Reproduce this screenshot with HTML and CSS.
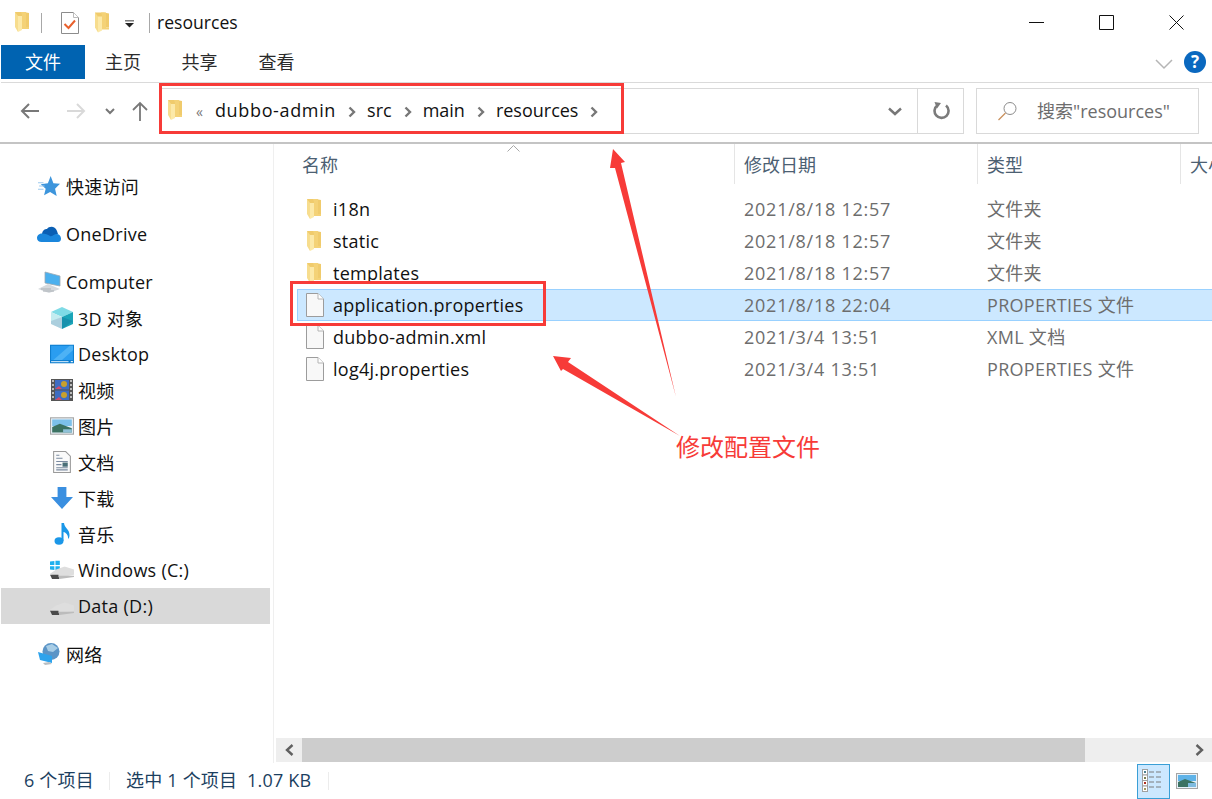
FILE: index.html
```html
<!DOCTYPE html>
<html lang="zh">
<head>
<meta charset="utf-8">
<title>resources</title>
<link rel="stylesheet" href="styles.css">
</head>
<body>
<svg class="defs" width="0" height="0" aria-hidden="true">
  <defs>
    <symbol id="folder" viewBox="0 0 14 20">
      <path d="M0 0H9L14 1V15H6L2 15Z" fill="#f0cb6c"/>
      <path d="M0 0V15L3 20V4Z" fill="#f7dd8e"/>
      <path d="M3 4H7V18L3 20Z" fill="#fcE9a8"/>
      <path d="M6 0H11V15H14V17H7V3Z" fill="#f4d277"/>
    </symbol>
    <symbol id="file" viewBox="0 0 18 24">
      <path d="M.5.5H12L17.500 6V23.500H.5Z" fill="#f8f8f8" stroke="#9c9c9c"/>
      <path d="M12 .5V6H17.500" fill="#fff" stroke="#b4b4b4"/>
    </symbol>
    <symbol id="chev" viewBox="0 0 8 12">
      <path d="M1.500 1.500 6 6 1.500 10.500" fill="none" stroke="#777" stroke-width="2.400"/>
    </symbol>
    <symbol id="drive" viewBox="0 0 23 12">
      <path d="M0 7 6 3 14 0 23 3 23 8 8 11Z" fill="#dedede"/>
      <path d="M0 8 8 8 9 12 2 12Z" fill="#4a4a4a"/>
      <path d="M8 9H23V10L9 12Z" fill="#bcbcbc"/>
    </symbol>
  </defs>
</svg>

<div class="window">
  <header class="titlebar">
    <svg class="ic-folder-t"><use href="#folder"/></svg>
    <span class="tsep tsep-a"></span>
    <svg class="ic-prop" viewBox="0 0 18 22">
      <path d="M.5.500H12.500L17.500 5.500V21.500H.5Z" fill="#fff" stroke="#8c8c8c"/>
      <path d="M12.500.500V5.500H17.500" fill="#fff" stroke="#bbb"/>
      <path d="M3.500 12 7.500 16 14 8.500" fill="none" stroke="#e8602c" stroke-width="2"/>
    </svg>
    <svg class="ic-folder-q"><use href="#folder"/></svg>
    <svg class="ic-qdrop" viewBox="0 0 10 8">
      <path d="M0 .5H10" stroke="#222" stroke-width="1"/>
      <path d="M0 3H10L5 8Z" fill="#222"/>
    </svg>
    <span class="tsep tsep-b"></span>
    <span class="title">resources</span>
    <div class="winbtns">
      <svg class="wb" viewBox="0 0 15 15"><path d="M0 7.500H15" stroke="#111"/></svg>
      <svg class="wb" viewBox="0 0 15 15"><path d="M.5.500H14.500V14.500H.5Z" fill="none" stroke="#111"/></svg>
      <svg class="wb" viewBox="0 0 15 15"><path d="M.5.500 14.500 14.500M14.500.500 .5 14.500" fill="none" stroke="#111"/></svg>
    </div>
  </header>

  <nav class="tabs">
    <span class="tab tab-file">文件</span>
    <span class="tab tab-home">主页</span>
    <span class="tab tab-share">共享</span>
    <span class="tab tab-view">查看</span>
    <span class="tabs-fill"></span>
    <svg class="ribbon-chev" viewBox="0 0 18 11"><path d="M1 1 9 9 17 1" fill="none" stroke="#b5b5b5" stroke-width="1.500"/></svg>
    <span class="help">?</span>
  </nav>

  <section class="addressrow">
    <svg class="nav-btn nav-back" viewBox="0 0 20 16"><path d="M19 8H2M9 1 2 8 9 15" fill="none" stroke="#787878" stroke-width="2"/></svg>
    <svg class="nav-btn nav-fwd" viewBox="0 0 20 16"><path d="M1 8H18M11 1 18 8 11 15" fill="none" stroke="#d9d9d9" stroke-width="2"/></svg>
    <svg class="nav-drop" viewBox="0 0 10 7"><path d="M1 1 5 5 9 1" fill="none" stroke="#777" stroke-width="2"/></svg>
    <svg class="nav-btn nav-up" viewBox="0 0 16 20"><path d="M8 20V2M1 9 8 2 15 9" fill="none" stroke="#787878" stroke-width="1.800"/></svg>
    <div class="addrbox">
      <svg class="addr-folder"><use href="#folder"/></svg>
      <span class="addr-more">«</span>
      <span class="crumb crumb-wide">dubbo-admin</span><svg class="crumb-chev"><use href="#chev"/></svg>
      <span class="crumb">src</span><svg class="crumb-chev"><use href="#chev"/></svg>
      <span class="crumb">main</span><svg class="crumb-chev"><use href="#chev"/></svg>
      <span class="crumb">resources</span><svg class="crumb-chev"><use href="#chev"/></svg>
      <span class="addr-fill"></span>
      <svg class="addr-drop" viewBox="0 0 14 9"><path d="M1 1.500 7 7 13 1.500" fill="none" stroke="#777" stroke-width="2.400"/></svg>
      <span class="addr-refresh">
        <svg viewBox="0 0 18 18" width="18" height="18"><path d="M5.500 3.200A7 7 0 1 0 14 3.500" fill="none" stroke="#7b7b7b" stroke-width="2.600"/><path d="M2.500 0 9 1 5 6.500Z" fill="#7b7b7b"/></svg>
      </span>
    </div>
    <div class="searchbox">
      <svg class="search-ic" viewBox="0 0 19 19"><circle cx="12" cy="6.500" r="6" fill="none" stroke="#8c8c8c"/><path d="M7.500 11 .5 18" stroke="#c98f5c" stroke-width="1.300"/></svg>
      <span class="search-text">搜索"resources"</span>
    </div>
  </section>

  <main class="body">
    <aside class="sidebar">
      <div class="side-item top lv0">
        <svg class="si" viewBox="0 0 20 20"><path d="M11.500 1 14 7.500 20 8 15.500 12.500 17 19 11 15.500 5.500 18.500 7 12.500 2.500 8.500 9 7.500Z" fill="#3d95dc"/><path d="M0 7H5M1 10H6M0 13H5" stroke="#9cc9ee" stroke-width="1"/></svg>
        <span>快速访问</span>
      </div>
      <div class="side-item top gap lv0">
        <svg class="si" viewBox="0 -3 24 22"><path d="M5 8C5.500 4 8 3 10 3 12 0 18-.5 20 5L21 8 12 12Z" fill="#0a5fb4"/><path d="M5 7.500C1.500 7.500 0 10 0 12 0 14.500 2 16 4.500 16H21C23 16 24 14.500 24 12.500 24 10 22 8 19.500 8 17.500 8 16 9.500 14 10.500 11 8.500 8 7.500 5 7.500Z" fill="#1a86dc"/></svg>
        <span>OneDrive</span>
      </div>
      <div class="side-item top gap lv0">
        <svg class="si" viewBox="0 0 24 22"><path d="M8 1 23 5V15L8 12Z" fill="#4bb0ee" stroke="#9ca8b2" stroke-width=".8"/><path d="M1 18 11 13 23 18 12 22Z" fill="#d5d9dd"/><path d="M4 18H14M6 20H17" stroke="#aab0b5"/></svg>
        <span>Computer</span>
      </div>
      <div class="side-item lv1">
        <svg class="si" viewBox="0 0 22 22"><path d="M11 0 22 5 11 10 0 5Z" fill="#7fdbe6"/><path d="M0 5 11 10V22L0 17Z" fill="#c3ecf0"/><path d="M22 5 11 10V22L22 17Z" fill="#1ba5b8"/><path d="M0 14 11 10 22 14 11 22 0 17Z" fill-opacity=".12" fill="#006"/></svg>
        <span>3D 对象</span>
      </div>
      <div class="side-item lv1">
        <svg class="si" viewBox="0 0 22 17"><rect width="22" height="17" fill="#0f7fd0"/><path d="M1 1H21V14L1 14Z" fill="#2a9df0"/><path d="M3 14 18 1H21V5L11 14Z" fill="#4db2f5"/><path d="M1 15.500H17" stroke="#cfe8fa"/><path d="M19 15.500H21" stroke="#fff"/></svg>
        <span>Desktop</span>
      </div>
      <div class="side-item lv1">
        <svg class="si" viewBox="0 0 22 22"><rect width="22" height="22" fill="#555"/><rect x="4" y="1" width="14" height="9.500" fill="#3f6dc2"/><rect x="4" y="11.500" width="14" height="9.500" fill="#3f6dc2"/><circle cx="13" cy="5" r="3" fill="#c8a02e"/><circle cx="13" cy="16" r="3" fill="#c8a02e"/><path d="M4 10 8 7 11 10ZM4 21 8 18 11 21Z" fill="#d24c6c"/><path d="M1 2H3M1 6H3M1 10H3M1 14H3M1 18H3M19 2H21M19 6H21M19 10H21M19 14H21M19 18H21" stroke="#ddd" stroke-width="1.500"/></svg>
        <span>视频</span>
      </div>
      <div class="side-item lv1">
        <svg class="si" viewBox="0 0 22 16"><rect x=".5" y=".5" width="21" height="15" fill="#e8f2fa" stroke="#a5a5a5"/><rect x="2" y="2" width="18" height="6" fill="#7cc0ea"/><path d="M2 9 9 6 20 10V14H2Z" fill="#3b7262"/><path d="M12 11H20V14H12Z" fill="#8fc1d8"/></svg>
        <span>图片</span>
      </div>
      <div class="side-item lv1">
        <svg class="si si-doc" viewBox="0 0 17 21"><path d="M.5.500H12L16.500 5V20.500H.5Z" fill="#fafafa" stroke="#9a9a9a"/><path d="M3 4H6M3 7H9M3 10H14M3 13H8M3 16H14M3 18H14" stroke="#7a8aa0"/><rect x="9" y="11" width="5" height="4" fill="#4a6f78"/></svg>
        <span>文档</span>
      </div>
      <div class="side-item lv1">
        <svg class="si" viewBox="0 0 20 20"><path d="M6 0H14V9H20L10 20 0 9H6Z" fill="#3a8fe0"/></svg>
        <span>下载</span>
      </div>
      <div class="side-item lv1">
        <svg class="si si-note" viewBox="0 0 16 22"><ellipse cx="5" cy="18" rx="4.500" ry="3.700" fill="#1b97e8"/><path d="M7.500 0H10C10.500 5 15.500 6 15.500 12 15.500 14 15 15 14 16 14.500 12 12 9.500 9.500 9V18H7.500Z" fill="#1b97e8"/></svg>
        <span>音乐</span>
      </div>
      <div class="side-item lv1">
        <svg class="si" viewBox="0 0 22 17"><path d="M0 .8 4 .2V4H0ZM5 0 9 0V4H5ZM0 5H4V8.500L0 8ZM5 5H9V9H5Z" fill="#1fb0ee"/><use href="#drive" x="0" y="5" width="22" height="12"/></svg>
        <span>Windows (C:)</span>
      </div>
      <div class="side-item lv1 selected">
        <svg class="si" viewBox="0 0 22 17"><use href="#drive" x="0" y="5" width="22" height="12"/></svg>
        <span>Data (D:)</span>
      </div>
      <div class="side-item top gap lv0">
        <svg class="si" viewBox="0 0 22 22"><circle cx="13" cy="8.500" r="8.500" fill="#5b94c6"/><path d="M8 3 14 1 20 5 15 9 10 8Z" fill="#a8cde6"/><path d="M0 9 14 13V20L2 17Z" fill="#2ea3ec"/><path d="M5 20 11 19 14 21 7 22Z" fill="#b9bec2"/></svg>
        <span>网络</span>
      </div>
    </aside>

    <section class="content">
      <div class="listwrap">
        <div class="colhead">
          <span class="col c-name">名称</span>
          <span class="col c-date">修改日期</span>
          <span class="col c-type">类型</span>
          <span class="col c-size">大小</span>
          <svg class="sort" viewBox="0 0 13 7"><path d="M.5 6.500 6.500.5 12.500 6.500" fill="none" stroke="#a8a8a8"/></svg>
        </div>
        <div class="rows">
          <div class="row"><span class="cell c-name"><svg class="ic-folder"><use href="#folder"/></svg>i18n</span><span class="cell c-date">2021/8/18 12:57</span><span class="cell c-type">文件夹</span></div>
          <div class="row"><span class="cell c-name"><svg class="ic-folder"><use href="#folder"/></svg>static</span><span class="cell c-date">2021/8/18 12:57</span><span class="cell c-type">文件夹</span></div>
          <div class="row"><span class="cell c-name"><svg class="ic-folder"><use href="#folder"/></svg>templates</span><span class="cell c-date">2021/8/18 12:57</span><span class="cell c-type">文件夹</span></div>
          <div class="row sel"><span class="cell c-name"><svg class="ic-file"><use href="#file"/></svg>application.properties</span><span class="cell c-date">2021/8/18 22:04</span><span class="cell c-type">PROPERTIES 文件</span></div>
          <div class="row"><span class="cell c-name"><svg class="ic-file"><use href="#file"/></svg>dubbo-admin.xml</span><span class="cell c-date">2021/3/4 13:51</span><span class="cell c-type">XML 文档</span></div>
          <div class="row"><span class="cell c-name"><svg class="ic-file"><use href="#file"/></svg>log4j.properties</span><span class="cell c-date">2021/3/4 13:51</span><span class="cell c-type">PROPERTIES 文件</span></div>
        </div>
      </div>
      <div class="hscroll">
        <span class="sb-btn"><svg viewBox="0 0 9 12" width="9" height="12"><path d="M7.500 1 2 6 7.500 11" fill="none" stroke="#606060" stroke-width="2.400"/></svg></span>
        <span class="sb-thumb"></span>
        <span class="sb-track"></span>
        <span class="sb-btn"><svg viewBox="0 0 9 12" width="9" height="12"><path d="M1.500 1 7 6 1.500 11" fill="none" stroke="#606060" stroke-width="2.400"/></svg></span>
      </div>
    </section>
  </main>

  <footer class="status">
    <span class="st st-count">6 个项目</span>
    <span class="st st-sel">选中 1 个项目&nbsp;&nbsp;1.07 KB</span>
    <span class="st-fill"></span>
    <span class="view view-on">
      <svg viewBox="0 0 24 24" width="24" height="24"><g fill="#fff" stroke="#a0a0a0"><rect x=".5" y=".5" width="5" height="5.500"/><rect x=".5" y="6" width="5" height="5.500"/><rect x=".5" y="11.500" width="5" height="5.500"/><rect x=".5" y="17" width="5" height="5.500"/></g><path d="M2 2H4V4H2Z" fill="#4a7f90"/><path d="M2 8H4V10H2Z" fill="#7a7f50"/><path d="M2 13H4V15H2Z" fill="#b03020"/><path d="M2 19H4V21H2Z" fill="#a09a60"/><path d="M7 3H12M14 3H19M7 8H12M14 8H19M7 13H12M14 13H19M7 18H12M14 18H19" stroke="#7c7c7c"/></svg>
    </span>
    <svg class="view-thumb" viewBox="0 0 22 16"><rect x=".5" y=".5" width="21" height="15" fill="#e8f2fa" stroke="#a5a5a5"/><rect x="2" y="2" width="18" height="6" fill="#5fb3e8"/><path d="M2 9 9 6 20 10V14H2Z" fill="#3b7262"/><path d="M12 10H20V14H12Z" fill="#7fbbe0"/></svg>
  </footer>

  <div class="mark mark-addr"></div>
  <div class="mark mark-file"></div>
  <svg class="arrows" viewBox="0 0 1212 799" width="1212" height="799">
    <path d="M613 149 625 162 621 163 676 397 615 168 610 168Z" fill="#f73b38"/>
    <path d="M553 356 571 358 568 362 680 436 563 369 561 371Z" fill="#f73b38"/>
  </svg>
  <div class="note">修改配置文件</div>
</div>
</body>
</html>
```

FILE: styles.css
```css
* { box-sizing: border-box; }
html, body { margin: 0; padding: 0; background: #fff; }
body {
  width: 1212px;
  height: 799px;
  overflow: hidden;
  font-family: "Open Sans", "Noto Sans CJK SC", sans-serif;
  font-size: 18px;
  letter-spacing: .27px;
  color: #111;
}
.defs { position: absolute; }
svg { display: block; flex: none; }

.window {
  position: relative;
  width: 1212px;
  height: 799px;
  display: flex;
  flex-direction: column;
}

/* Title bar */
.titlebar {
  height: 45px;
  flex: none;
  display: flex;
  align-items: center;
}
.ic-folder-t { width: 14px; height: 20px; margin-left: 15px; margin-top: -1px; }
.tsep { width: 1px; height: 20px; background: #a8a8a8; }
.tsep-a { margin-left: 12px; }
.ic-prop { width: 18px; height: 22px; margin-left: 19px; }
.ic-folder-q { width: 14px; height: 21px; margin-left: 16px; }
.ic-qdrop { width: 9px; height: 8px; margin-left: 16px; margin-top: 3px; }
.tsep-b { margin-left: 15px; }
.title { margin-left: 7px; font-size: 17.6px; letter-spacing: 0; margin-top: -1px; }
.winbtns {
  margin-left: auto;
  display: flex;
  align-items: center;
  gap: 55px;
  padding-right: 28px;
}
.wb { width: 15px; height: 15px; }

/* Ribbon tabs */
.tabs {
  height: 38px;
  flex: none;
  display: flex;
  border-bottom: 1px solid #dadada;
  margin-left: 1px;
  align-items: flex-start;
  letter-spacing: 0;
  color: #2b2b2b;
}
.tab { height: 34px; line-height: 35px; text-align: center; }
.tab-file { width: 84px; background: #0063b1; color: #fff; }
.tab-home { width: 76px; }
.tab-share { width: 77px; }
.tab-view { width: 77px; }
.tabs-fill { flex: 1; }
.ribbon-chev { width: 18px; height: 11px; margin-top: 14px; margin-right: 11px; }
.help {
  width: 22px;
  height: 22px;
  border-radius: 50%;
  background: #0a68bf;
  color: #fff;
  font-size: 17px;
  font-weight: 700;
  line-height: 22px;
  text-align: center;
  margin-top: 6px;
  margin-right: 6px;
}

/* Address row */
.addressrow {
  height: 61px;
  flex: none;
  display: flex;
  align-items: center;
  border-bottom: 2px solid #c4c4c4;
  padding-bottom: 3px;
  letter-spacing: 0;
}
.nav-btn { flex: none; }
.nav-back { width: 20px; height: 16px; margin-left: 20px; }
.nav-fwd { width: 20px; height: 16px; margin-left: 26px; }
.nav-drop { width: 10px; height: 7px; margin-left: 19px; }
.nav-up { width: 16px; height: 20px; margin-left: 17px; }
.addrbox {
  width: 803px;
  height: 46px;
  margin-left: 13px;
  border: 1px solid #d9d9d9;
  display: flex;
  align-items: center;
}
.addr-folder { width: 14px; height: 20px; margin-left: 6px; margin-top: -2px; }
.addr-more { color: #777; font-size: 14px; margin-left: 14px; margin-right: 12px; }
.crumb { margin-top: -2px; }
.crumb-wide { letter-spacing: .65px; }
.crumb-chev { width: 8px; height: 12px; margin: 1px 11px 0 12px; }
.addr-fill { flex: 1; }
.addr-drop { width: 14px; height: 9px; margin-right: 15px; }
.addr-refresh {
  width: 46px;
  height: 44px;
  border-left: 1px solid #d9d9d9;
  display: flex;
  align-items: center;
  justify-content: center;
}
.searchbox {
  width: 223px;
  height: 46px;
  margin-left: 12px;
  border: 1px solid #d9d9d9;
  display: flex;
  align-items: center;
  color: #6d6d6d;
}
.search-ic { width: 19px; height: 19px; margin-left: 21px; }
.search-text { margin-left: 20px; margin-top: -3px; }

/* Main */
.body {
  flex: 1;
  min-height: 0;
  display: flex;
}
.sidebar {
  width: 274px;
  flex: none;
  border-right: 1px solid #efefef;
  padding: 24px 3px 0 1px;
}
.side-item {
  height: 36px;
  display: flex;
  align-items: center;
  position: relative;
  white-space: nowrap;
}
.side-item span { margin-top: -1px; }
.side-item.gap { margin-top: 12px; }
.lv0 { padding-left: 36px; }
.lv1 { padding-left: 49px; }
.si { width: 24px; height: 22px; }
.lv0 .si { margin-right: 5px; }
.lv1 .si { margin-right: 4px; }
.selected { background: #d9d9d9; }

/* Content */
.content {
  flex: 1;
  min-width: 0;
  display: flex;
  flex-direction: column;
}
.listwrap { flex: 1; min-height: 0; overflow: hidden; padding-left: 2px; }
.colhead {
  height: 40px;
  position: relative;
  display: flex;
  color: #4c6072;
  letter-spacing: 0;
}
.col {
  height: 40px;
  line-height: 42px;
  border-right: 1px solid #e5e5e5;
  padding-left: 9px;
  flex: none;
  overflow: hidden;
  white-space: nowrap;
}
.sort { position: absolute; left: 231px; top: 1px; width: 13px; height: 7px; }
.col.c-size { border-right: 0; width: 32px; }
.col.c-name { width: 459px; padding-left: 26px; }
.col.c-date { width: 243px; }
.col.c-type { width: 203px; }
.rows { padding-top: 9px; }
.row {
  height: 32px;
  display: flex;
  align-items: center;
  margin-left: 21px;
  width: 919px;
  border: 1px solid transparent;
  border-right: 0;
}
.row.sel { background: #cce8ff; border-color: #99d1ff; }
.cell { color: #6d6d6d; white-space: nowrap; flex: none; padding-left: 9px; }
.cell.c-name {
  color: #111;
  width: 437px;
  display: flex;
  align-items: center;
}
.cell.c-date { width: 243px; letter-spacing: .75px; }
.cell.c-type { letter-spacing: .3px; margin-top: -2px; }
.ic-folder { width: 14px; height: 20px; margin-right: 12px; }
.ic-file { width: 18px; height: 24px; margin-left: -1px; margin-right: 9px; }

.hscroll {
  height: 24px;
  flex: none;
  display: flex;
  background: #eee;
  margin-left: 2px;
  margin-bottom: 1px;
}
.sb-btn {
  width: 26px;
  display: flex;
  align-items: center;
  justify-content: center;
  flex: none;
}
.sb-thumb { width: 783px; background: #cdcdcd; }
.sb-track { flex: 1; }

/* Status bar */
.status {
  height: 36px;
  flex: none;
  display: flex;
  align-items: center;
  color: #1c3f5f;
  letter-spacing: .2px;
}
.st { border-right: 1px solid #ececec; height: 18px; line-height: 16px; white-space: nowrap; }
.st-count { width: 110px; padding-left: 24px; }
.st-sel { width: 219px; padding-left: 16px; }
.st-fill { flex: 1; }
.view {
  width: 33px;
  height: 35px;
  display: flex;
  align-items: center;
  justify-content: center;
  background: #cce8ff;
  border: 1px solid #3a9fd6;
}
.view-thumb { width: 22px; height: 16px; margin-left: 6px; margin-right: 14px; }

/* Annotations lying over the window */
.mark {
  position: absolute;
  border: 3px solid #f73b38;
}
.mark-addr { left: 159px; top: 83px; width: 465px; height: 51px; }
.mark-file { left: 290px; top: 281px; width: 256px; height: 45px; }
.arrows { position: absolute; left: 0; top: 0; pointer-events: none; }
.note {
  position: absolute;
  left: 676px;
  top: 430px;
  color: #f73b38;
  font-size: 24px;
  letter-spacing: 0;
  line-height: 34px;
  white-space: nowrap;
}
```
